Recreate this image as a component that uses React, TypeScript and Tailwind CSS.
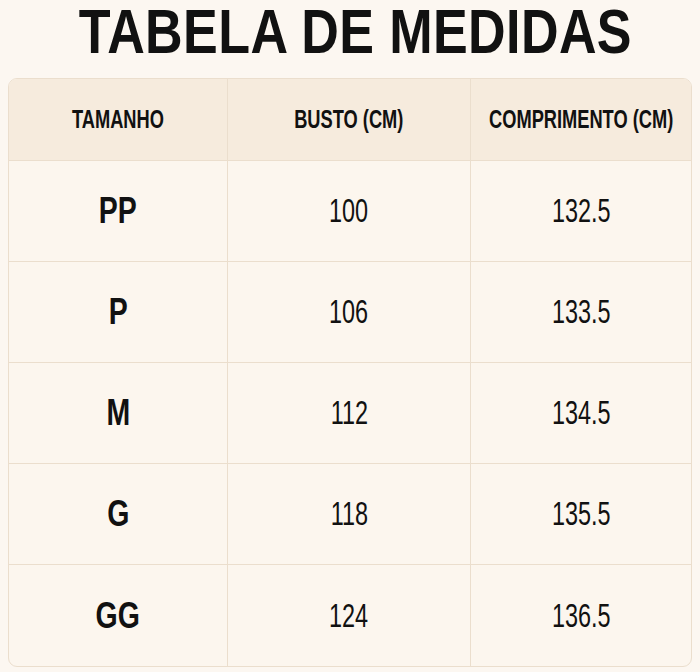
const rows = [
  { size: "PP", busto: "100", comp: "132.5" },
  { size: "P", busto: "106", comp: "133.5" },
  { size: "M", busto: "112", comp: "134.5" },
  { size: "G", busto: "118", comp: "135.5" },
  { size: "GG", busto: "124", comp: "136.5" },
];

// condensed look: Liberation Sans squeezed horizontally
function Narrow({ children, className = "" }: { children: React.ReactNode; className?: string }) {
  return <span className={`inline-block whitespace-nowrap ${className}`}>{children}</span>;
}

export default function App() {
  return (
    <div className="w-[700px] h-[672px] bg-[#fcf7f1] text-[#111] flex flex-col items-center font-['Liberation_Sans',Arial,sans-serif]">
      <div className="h-[78px] w-full flex justify-center pl-[10px]">
        <Narrow className="text-[56px] leading-[63px] font-bold scale-x-[0.93] scale-y-[1.125] tracking-[0.4px]">TABELA DE MEDIDAS</Narrow>
      </div>
      <div className="w-[684px] rounded-[9px] border border-[#ebdecd] overflow-hidden grid grid-cols-[219px_243px_minmax(0,1fr)] bg-[#fcf6ee]">
        <div className="h-[82px] bg-[#f6ebdd] flex items-center justify-center border-r border-b border-[#ebdecd]">
          <Narrow className="text-[25px] font-bold scale-x-[0.73]">TAMANHO</Narrow>
        </div>
        <div className="h-[82px] bg-[#f6ebdd] flex items-center justify-center border-r border-b border-[#ebdecd]">
          <Narrow className="text-[25px] font-bold scale-x-[0.73]">BUSTO (CM)</Narrow>
        </div>
        <div className="h-[82px] bg-[#f6ebdd] flex items-center justify-center border-b border-[#ebdecd]">
          <Narrow className="text-[25px] font-bold scale-x-[0.73]">COMPRIMENTO (CM)</Narrow>
        </div>
        {rows.map((r, i) => (
          <div key={r.size} className="contents">
            <div className={`h-[101px] flex items-center justify-center border-r border-[#ebdecd] ${i < rows.length - 1 ? "border-b" : ""}`}>
              <Narrow className="text-[37px] font-bold scale-x-[0.77]">{r.size}</Narrow>
            </div>
            <div className={`h-[101px] flex items-center justify-center border-r border-[#ebdecd] ${i < rows.length - 1 ? "border-b" : ""}`}>
              <Narrow className="text-[33px] scale-x-[0.71]">{r.busto}</Narrow>
            </div>
            <div className={`h-[101px] flex items-center justify-center border-[#ebdecd] ${i < rows.length - 1 ? "border-b" : ""}`}>
              <Narrow className="text-[33px] scale-x-[0.71]">{r.comp}</Narrow>
            </div>
          </div>
        ))}
      </div>
    </div>
  );
}
